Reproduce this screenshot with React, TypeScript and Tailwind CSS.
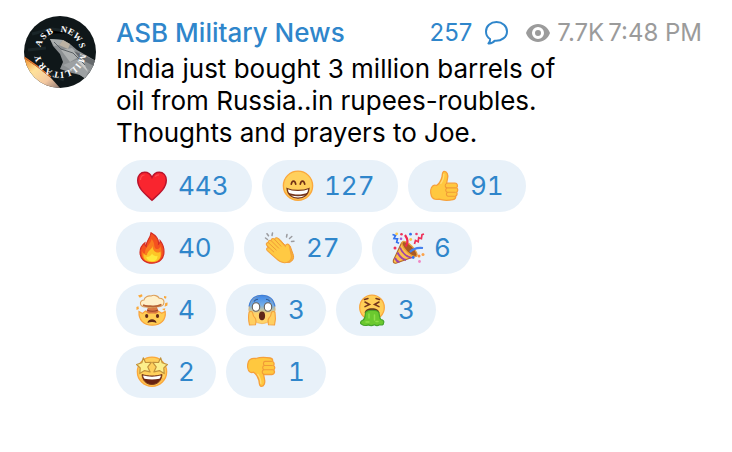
import React from "react";
import clsx from "clsx";

interface Reaction {
  label: string;
  count: number;
  icon: React.ReactNode;
}

const Face = () => (
  <>
    <circle cx="16" cy="15.7" r="14.6" fill="#ffd05c" stroke="#fba83c" strokeWidth="1.4" />
    <path d="M5 22a13 13 0 0 0 22 0" fill="none" stroke="#fdb64a" strokeWidth="1.5" />
  </>
);

const Thumb = () => (
  <>
    <path
      d="M8.5 15.5C11 14 13.2 10 14 7c.3-2.5.2-5.7 2.3-5.7 2.8 0 3.9 3.4 3.3 6.7-.3 2-.8 3.7-1 5.200h8.400c2.500.1 3.200 3 1.600 4.500 1.600 1.300 1.400 3.500 0 4.500.9 1.500.4 3.300-1 4 .3 1.800-.8 3.200-2.500 3.500-5 .9-10.300.8-14.300-.5-3.500.6-6-.2-7.300-3C2 22 2.500 17.500 5 15.700c1-.6 2.300-.8 3.500-.2z"
      fill="#ffc83f"
      stroke="#f6a03a"
      strokeWidth="1.3"
      strokeLinejoin="round"
    />
    <path
      d="M18.6 13.4c-2 1.200-1.800 4 .4 4.500h8.600M19 17.900c-1.900 1-1.700 3.800.3 4.300h8M19.400 22.300c-1.500 1-1.300 3.500.5 4h6.500"
      fill="none"
      stroke="#f09a37"
      strokeWidth="1.1"
      strokeLinecap="round"
    />
    <path d="M15.8 3.8c.2 3-.5 6.200-3.300 10" fill="none" stroke="#ffdb74" strokeWidth="1.3" />
  </>
);

const Heart = () => (
  <>
    <path
      d="M16 30.3C12 26 1.7 19.5 1.7 10.2 1.7 5.300 4.700 2.200 8.700 2.200c3.300 0 5.900 1.800 7.300 5.200 1.400-3.400 4-5.200 7.300-5.200 4 0 7 3.100 7 8 0 9.300-10.300 15.800-14.300 20.100z"
      fill="#f9252f"
      stroke="#b9142c"
      strokeWidth="1.4"
    />
    <path d="M4.500 10c0-3 1.600-4.900 4-5M19 6.700c1-1.300 2.300-1.800 4-1.800" fill="none" stroke="#fb4b50" strokeWidth="1.2" />
  </>
);

const Grin = () => (
  <>
    <Face />
    <path d="M9.300 14.200c.7-4.200 3.700-4.200 4.400 0M18.300 14.200c.7-4.200 3.700-4.200 4.400 0" fill="none" stroke="#703016" strokeWidth="1.7" strokeLinecap="round" />
    <path d="M5 18.500c6 2.600 16 2.600 22 0-.5 6-5 9.700-11 9.700S5.500 24.500 5 18.500z" fill="#fff" stroke="#74351c" strokeWidth="1.2" />
    <path d="M6.300 22.800c6 2.400 13.400 2.400 19.400 0-1.400 3.300-5 5.400-9.700 5.400s-8.300-2.100-9.700-5.400z" fill="#74351c" />
    <path d="M9 25.500c4.500 1 9.500 1 14 0-3.500 2.500-10.500 2.500-14 0z" fill="#fff" />
  </>
);

const Fire = () => (
  <>
    <path
      d="M15 .8c5.400 3 8 7.200 7.500 11.400 1.200-.7 1.700-2 1.600-3.500 2.600 3.300 3.900 7 3.900 11C28 27 23 31.200 16 31.200S4 27 4 20.300c0-4 2-7.400 5-9.600-.2 1.800.2 3 1.300 3.800C9.700 9 14.500 6.500 15 .8z"
      fill="#f4511f"
      stroke="#d42a22"
      strokeWidth="1.1"
    />
    <path d="M15.500 7c4 4 1.500 7.500 4.500 10 2 .5 4-.8 4.500-3 2.500 8 1 15.700-8.500 16C8 30 5 26 6 19c.6 1.700 1.700 2.500 3 2.500C8.500 15 15 12.500 15.500 7z" fill="#fa7b1e" />
    <path d="M16.500 14c.3 4 2.200 6.500 5.500 6.500 1.200 0 2-.5 2.400-1C26 26 22.500 30 16 30s-9.500-3.500-8.300-8.500c.8 1.300 2 2 3.300 1.700 0-4 4.700-5.200 5.500-9.200z" fill="#fdc526" />
    <path d="M16 21.500c1 2 3.200 3 5.500 2.500 0 3.500-2 5.200-5.500 5.200s-5.500-1.700-5.700-4.200c2.200.3 4.700-1 5.700-3.500z" fill="#fee93d" />
  </>
);

const Clap = () => (
  <>
    <path d="M3.500 7.500l-2-1.500M4.500 3.800L3 1.700M8 3.500l.5-2.500M22.500 5l.5-2.500M25.500 6.500l2.300-2M27.500 9.500l2.500-.3" stroke="#9b9b9f" strokeWidth="1.5" strokeLinecap="round" />
    <path d="M13 7.500c1.500-1.500 3 0 4 1.300l6 6.700c-.3-2.700 2.500-3.700 3.500-.5l3 8.500c1 5-4 8.500-8 6.500z" fill="#f8b038" stroke="#f29a36" strokeWidth="1" />
    <path
      d="M3 13.600c-1.700-2 .3-3.800 1.900-2.400-1.500-2.200.7-4 2.500-2.200-.7-2.300 1.600-3.500 3.300-1.500.2-2 2.300-2.300 3.600-.8l7 7.600c.3-2.700 3.800-3.200 4.200.5l1.800 8.700c.8 4.300-3 7.500-7 7.200-3.500-.2-5.700-1.700-8-4l-8.700-7.800c-2-1.700-.5-4 1.200-2.900z"
      fill="#ffc943"
      stroke="#f4a33c"
      strokeWidth="1.1"
    />
    <path d="M3.300 14l6.500 6M5.200 11.500l7 6.500M7.700 9.200l7 7M10.900 7.700l6 6.500" stroke="#f09b37" strokeWidth="1" strokeLinecap="round" />
  </>
);

const Party = () => (
  <>
    <path d="M9.500 11L24 24 4.500 31c-2.500.8-3.700-.7-3-3z" fill="#fcc04a" stroke="#b56a27" strokeWidth="1.1" />
    <path d="M8 15.500c2 5 6 9 11.500 10.300M5.500 20.500c2 4 5 6.700 8.500 7.500M3 26c1 2.300 2.700 3.700 4.500 4.200" fill="none" stroke="#a044a5" strokeWidth="1.9" />
    <ellipse cx="17.5" cy="17" rx="3.7" ry="10" transform="rotate(-45 17.5 17)" fill="#aa5a22" stroke="#e8a23c" strokeWidth="1.3" />
    <path d="M13.500 14.500c3.500-4 2-8-.5-11.500" fill="none" stroke="#f0284e" strokeWidth="2.2" />
    <path d="M18 20c3.500-4 7-4.700 13-4" fill="none" stroke="#4581ed" strokeWidth="2.2" />
    <path d="M.5 2.500l3 1-1.500 3 3.500.3-.8 3.500 2.300 1" fill="none" stroke="#3472ed" strokeWidth="1.7" />
    <path d="M22.500 12l1-3.500 2.700 1.200.5-4 2.700 1 .6-4L32 2" fill="none" stroke="#ee3159" strokeWidth="1.7" />
    <circle cx="4.7" cy="1.8" r="1.4" fill="#fac74b" />
    <circle cx="9.5" cy="2.2" r="1.3" fill="#ee3159" />
    <circle cx="9" cy="6.7" r="1.3" fill="#a65ad4" />
    <circle cx="18.5" cy="2.2" r="1.4" fill="#3472ed" />
    <circle cx="24.5" cy="2" r="1.3" fill="#e94370" />
    <circle cx="18.7" cy="7.5" r="1.4" fill="#fac74b" />
    <circle cx="3" cy="16" r="1.5" fill="#ee3159" />
    <circle cx="21.2" cy="25.5" r="1.4" fill="#3472ed" />
    <circle cx="27" cy="24" r="1.5" fill="#fb8b3a" />
    <circle cx="31" cy="22.5" r="1.5" fill="#fba34a" />
    <circle cx="27.5" cy="29.5" r="1.4" fill="#ef86c4" />
  </>
);

const MindBlown = () => (
  <>
    <path d="M3 17.500l3.500 2 3-2.500 3.500 2.500 3.200-2 3.300 2 3-2.300 3.200 2 3.500-1.700c1 8-4 13.700-13 13.700S2.500 25.500 3 17.500z" fill="#ffcd54" stroke="#f9a33d" strokeWidth="1.2" />
    <path d="M12 13h9l1.500 5c-3 2-9 2-12 0z" fill="#d97842" />
    <path d="M11 16c3 1.500 8 1.500 11 0" fill="none" stroke="#9e4629" strokeWidth="1.3" />
    <path d="M4.500 10C4 7.500 6 6 8 6c.5-3 4-4.500 7-4 3-1.500 7-.3 8.200 2.200 3-.2 5.300 2 4.700 4.700-.3 2.600-3 4-6 3.700-4 1.300-8 1.300-12 .3-3 .2-5-1-5.400-2.900z" fill="#fff0ca" stroke="#dda05b" strokeWidth="1.1" />
    <path d="M7 11c3 1.600 5 1 7.500 1.200 4 .5 7.500.3 11-1.600" fill="none" stroke="#b76335" strokeWidth="1.7" />
    <path d="M2 1.500l4-1.300.5 2-2.700 1.500zM.4 13l2-.8.5 2.800-2.400 1zM28 2l2.500.5-.5 2.200-2-.8zM29.300 9l2.300-.6-.2 3.200-2.800 1.200zM26 15l3.300-.8-.6 2.500z" fill="#fba838" />
    <ellipse cx="10.7" cy="22" rx="1.6" ry="1.9" fill="#612b18" />
    <ellipse cx="21.5" cy="22" rx="1.6" ry="1.9" fill="#612b18" />
    <path d="M11.500 29c.3-5 8.700-5 9 0-2.500-1.200-6.500-1.200-9 0z" fill="#612b18" />
  </>
);

const Scream = () => (
  <>
    <defs>
      <linearGradient id="scream" x1="0" y1="0" x2="0" y2="1">
        <stop offset="0" stopColor="#3f87e8" />
        <stop offset=".35" stopColor="#73aee9" />
        <stop offset=".65" stopColor="#ffd368" />
      </linearGradient>
    </defs>
    <ellipse cx="16" cy="15.5" rx="13.2" ry="14.2" fill="url(#scream)" stroke="#f0a747" strokeWidth=".6" />
    <path d="M3 12.500C4.500 4.500 10 1.300 16 1.300S27.500 4.500 29 12.500" fill="none" stroke="#3e7fda" strokeWidth="1.2" />
    <path d="M8 7.500c1-1.300 2.200-2 4-2.200M24 7.500c-1-1.300-2.200-2-4-2.200" fill="none" stroke="#315a91" strokeWidth="1.1" />
    <ellipse cx="10" cy="13" rx="3.7" ry="4.3" fill="#fff" stroke="#65605c" strokeWidth="1.1" />
    <ellipse cx="22" cy="13" rx="3.7" ry="4.3" fill="#fff" stroke="#65605c" strokeWidth="1.1" />
    <ellipse cx="16" cy="21.8" rx="3.1" ry="4.4" fill="#602719" />
    <path d="M3 18.500c1.300-1.800 3.500-1 3.800 1 .2 2 .7 3 2 4.200 2 2 1.200 4.300.7 7L3.500 31c-1-4-1.300-8-.5-12.500z" fill="#ffcf60" stroke="#f5a13c" strokeWidth="1.1" />
    <path d="M29 18.500c-1.300-1.800-3.500-1-3.800 1-.2 2-.7 3-2 4.200-2 2-1.200 4.300-.7 7l6 .3c1-4 1.300-8 .5-12.500z" fill="#ffcf60" stroke="#f5a13c" strokeWidth="1.1" />
  </>
);

const Vomit = () => (
  <>
    <circle cx="16" cy="13.5" r="12.3" fill="#ffcf58" stroke="#f9a83f" strokeWidth="1.3" />
    <path d="M8.500 5.500l3.500-1M23.500 5.500l-3.500-1M9 8l4.500 2.500L9 12.700M23 8l-4.500 2.500 4.500 2.200" fill="none" stroke="#74351c" strokeWidth="1.5" strokeLinecap="round" />
    <path d="M8.700 19c0-3 3-4.700 7.300-4.700s7.300 1.700 7.300 4.700z" fill="#66351b" />
    <path
      d="M9.500 19c1-3.700 12.500-3.700 13.500 0 .7 3 .3 5.500 2 6.500 2 .5 3.700 2 2.500 3.500.3 2-2 2.300-4 1.700-1.500 1-3.500 1-5 0-2 1-4.500 1-6 .2-2.500.8-5 .7-6.500-.4-2.500-.6-1.600-3.500.7-4.200C9.500 25 8.900 22.500 9.500 19z"
      fill="#6bc92f"
      stroke="#45a42a"
      strokeWidth="1.2"
    />
    <path d="M13 20v4M18.500 21v5M10 28h3M20 27.500h2" stroke="#8fdf49" strokeWidth="1.5" strokeLinecap="round" />
  </>
);

const StarStruck = () => (
  <>
    <Face />
    <path d="M6 18.500c6 2 14 2 20 0-.5 6-4.500 10-10 10s-9.500-4-10-10z" fill="#68220f" stroke="#7b3a1d" strokeWidth="1" />
    <path d="M7 19.500c5.500 1.500 12.500 1.500 18 0-.3 1.500-.7 2.300-1.500 3.300-5 1-10 1-15 0-.8-1-1.200-1.800-1.500-3.300z" fill="#fff" />
    <path
      d="M7.300 1.800l2.200 4.700 5.800-.1-3.500 4.500 2.300 5-5.500-1.300-4.800 3 .4-5.700L.6 8.500l5.200-1.700zM24.700 1.800l-2.200 4.700-5.800-.1 3.500 4.500-2.300 5 5.500-1.300 4.800 3-.4-5.700 3.600-3.400-5.200-1.700z"
      fill="#fcef8c"
      stroke="#c1923c"
      strokeWidth="1.2"
      strokeLinejoin="round"
    />
  </>
);

const ThumbDown = () => (
  <g transform="matrix(1 0 0 -1 -1 31.7)">
    <Thumb />
  </g>
);

const reactions: Reaction[] = [
  { label: "Heart", count: 443, icon: <Heart /> },
  { label: "Grin", count: 127, icon: <Grin /> },
  { label: "Thumbs up", count: 91, icon: <Thumb /> },
  { label: "Fire", count: 40, icon: <Fire /> },
  { label: "Clap", count: 27, icon: <Clap /> },
  { label: "Party", count: 6, icon: <Party /> },
  { label: "Mind blown", count: 4, icon: <MindBlown /> },
  { label: "Scream", count: 3, icon: <Scream /> },
  { label: "Vomit", count: 3, icon: <Vomit /> },
  { label: "Star struck", count: 2, icon: <StarStruck /> },
  { label: "Thumbs down", count: 1, icon: <ThumbDown /> },
];

const ReactionPill = ({ label, count, icon }: Reaction) => {
  return (
    <button
      type="button"
      aria-label={`${label} ${count}`}
      className={clsx(
        "flex h-[52px] items-center gap-[10px] rounded-full bg-[#e8f1f9] pl-5 text-[26px] leading-8 text-[#2f86cb] tabular-nums",
        count > 99 ? "w-[136px]" : count > 9 ? "w-[118px]" : "w-[100px]"
      )}
    >
      <svg viewBox="0 0 32 32" className="size-8 shrink-0 overflow-visible" aria-hidden="true">
        {icon}
      </svg>
      <span>{count}</span>
    </button>
  );
};

// letter and its bearing on the ring, in degrees clockwise from the top
const ring: [string, number][] = [
  ["A", 293], ["S", 314], ["B", 333],
  ["N", 10], ["E", 29], ["W", 50], ["S", 73],
  ["M", 106], ["I", 127], ["L", 143], ["L", 160], ["I", 175], ["T", 190], ["A", 210], ["R", 231], ["Y", 253],
];

const Avatar = () => {
  return (
    <svg viewBox="0 0 72 72" className="mt-4 size-[72px] shrink-0 rounded-full" role="img" aria-label="ASB Military News">
      <defs>
        <linearGradient id="flame" x1="0" y1="0" x2="1" y2="1">
          <stop offset="0" stopColor="#f08a25" />
          <stop offset=".35" stopColor="#ffe29a" />
          <stop offset=".7" stopColor="#f3c7a0" />
          <stop offset="1" stopColor="#8d7770" />
        </linearGradient>
      </defs>
      <rect width="72" height="72" fill="#0f1719" />
      <path d="M8 18l20-5 28 4M4 34l18-2M26 58l14 6" stroke="#1a2528" strokeWidth="3" />
      <path d="M0 42l12 8 15 12 9 10H18L4 56z" fill="url(#flame)" />
      <path d="M0 41l13 9 14 11" fill="none" stroke="#e8742a" strokeWidth="1.5" />
      <path d="M26 23l13 1 7 4 7 6 19 11v14l-9 5-7-5-8-2-12-4 3-7-3-8-7-8z" fill="#8b8f91" />
      <path d="M26 23l13 1-4 5-5 1z" fill="#a9adac" />
      <path d="M39 24l7 4-2 5-9-4z" fill="#bbb2a3" />
      <path d="M37 34l11-2 8 8-10 6z" fill="#aeb1b1" />
      <path d="M50 35l22 10v6L56 43z" fill="#65696c" />
      <path d="M39 49l13-5 13 10-4 8z" fill="#9da1a3" />
      <path d="M52 44l8 3 4 9z" fill="#c9c9c7" />
      <path d="M30 26l7 7 12 4 12 12" fill="none" stroke="#5a6064" strokeWidth="1" />
      {ring.map(([letter, angle], index) => {
        return (
          <text
            key={index}
            x="36"
            y="16"
            textAnchor="middle"
            transform={`rotate(${angle} 36 36)`}
            className="fill-white font-['Liberation_Serif',serif] text-[9px] font-bold"
          >
            {letter}
          </text>
        );
      })}
    </svg>
  );
};

const App = () => {
  return (
    <main className="min-h-screen bg-white font-['Inter',sans-serif]">
      <article className="flex gap-5 pl-6 pr-[30px]">
        <Avatar />
        <div className="min-w-0 flex-1 pt-[17px]">
          <header className="flex items-center justify-between whitespace-nowrap leading-8">
            <h1 className="text-[26px] font-medium text-[#2f86cb]">ASB Military News</h1>
            <div className="flex items-center text-[24px] text-[#9b9b9b]">
              <a href="#comments" className="flex items-center gap-3 text-[#2f86cb]">
                257
                <svg viewBox="0 0 24 24" className="size-6" fill="none" aria-hidden="true">
                  <path
                    d="M12.500 1C6.600 1 2 5.100 2 10.400c0 3.400 1.600 6 4.100 7.600.2 1.900-.5 3.300-1.700 4.400 2.700.3 4.800-.7 6.300-2.700 6.800.6 12.300-3.700 12.300-9.300C23 5.100 18.400 1 12.500 1z"
                    stroke="currentColor"
                    strokeWidth="2"
                    strokeLinejoin="round"
                  />
                </svg>
              </a>
              <svg viewBox="0 0 24 18" className="ml-[18px] h-[18px] w-6" aria-hidden="true">
                <path
                  fillRule="evenodd"
                  d="M12 0C6.500 0 2 3.500 0 9c2 5.500 6.500 9 12 9s10-3.500 12-9c-2-5.500-6.500-9-12-9zm0 3a6 6 0 1 1 0 12 6 6 0 0 1 0-12zm0 3a3 3 0 1 0 0 6 3 3 0 0 0 0-6z"
                  fill="#9b9b9b"
                />
              </svg>
              <span className="ml-[7px]">7.7K</span>
              <time className="ml-1">7:48 PM</time>
            </div>
          </header>
          <p className="mt-1 max-w-[450px] text-[26px] leading-8 text-black">
            India just bought 3 million barrels of oil from Russia..in rupees-roubles. Thoughts and prayers to Joe.
          </p>
          <div className="mt-[11px] flex max-w-[420px] flex-wrap gap-[10px]">
            {reactions.map((elm) => {
              return <ReactionPill key={elm.label} label={elm.label} count={elm.count} icon={elm.icon} />;
            })}
          </div>
        </div>
      </article>
    </main>
  );
};

export default App;
